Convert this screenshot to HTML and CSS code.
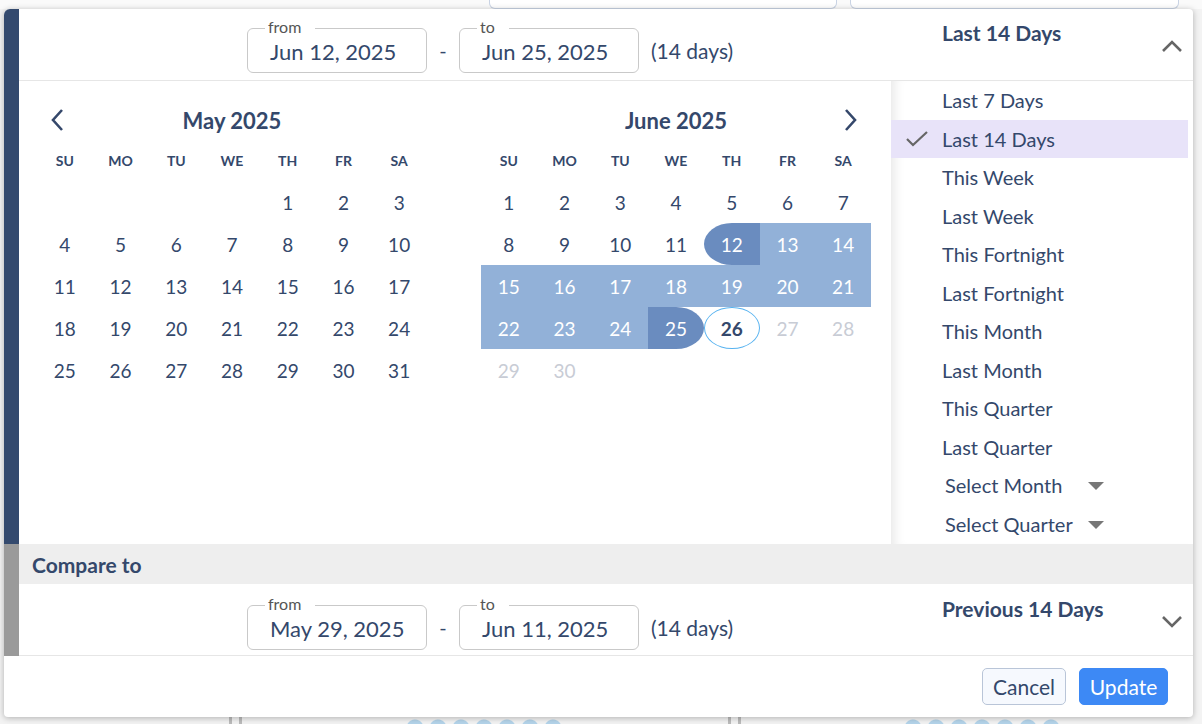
FILE: index.html
```html
<!DOCTYPE html>
<html lang="en">
<head>
    <meta charset="UTF-8">
    <meta name="viewport" content="width=device-width, initial-scale=1.0">
    <title>Date Range Picker</title>
    <link rel="stylesheet" href="styles.css">
</head>
<body>
    <div class="backdrop">
        <div class="toolbar">
            <div class="tool-btn first"></div>
            <div class="tool-btn second"></div>
        </div>
        <div class="chart-strip">
            <span class="axis a1"></span>
            <span class="dots d1"></span>
            <span class="axis a2"></span>
            <span class="dots d2"></span>
        </div>
    </div>

    <div class="picker">
        <section class="range primary">
            <div class="range-head">
                <div class="dates">
                    <div class="field">
                        <span class="field-label">from</span>
                        <span class="field-value">Jun 12, 2025</span>
                    </div>
                    <span class="dash">-</span>
                    <div class="field">
                        <span class="field-label">to</span>
                        <span class="field-value">Jun 25, 2025</span>
                    </div>
                    <span class="count">(14 days)</span>
                </div>
                <div class="preset-toggle">
                    <span class="preset-name">Last 14 Days</span>
                    <svg class="chevron" width="22" height="14" viewBox="0 0 22 14"><path d="M2 12 L11 3 L20 12" fill="none" stroke="#666" stroke-width="2.6"/></svg>
                </div>
            </div>

            <div class="range-body">
                <div class="calendars">
                    <div class="month">
                        <div class="month-head">
                            <span class="nav"><svg width="14" height="24" viewBox="0 0 14 24"><path d="M12 2 L3 12 L12 22" fill="none" stroke="#35486b" stroke-width="2.6"/></svg></span>
                            <span class="month-title">May 2025</span>
                            <span class="nav"></span>
                        </div>
                        <div class="weekdays">
                            <span>SU</span><span>MO</span><span>TU</span><span>WE</span><span>TH</span><span>FR</span><span>SA</span>
                        </div>
                        <div class="days">
                            <span></span><span></span><span></span><span></span>
                            <span>1</span><span>2</span><span>3</span>
                            <span>4</span><span>5</span><span>6</span><span>7</span><span>8</span><span>9</span><span>10</span>
                            <span>11</span><span>12</span><span>13</span><span>14</span><span>15</span><span>16</span><span>17</span>
                            <span>18</span><span>19</span><span>20</span><span>21</span><span>22</span><span>23</span><span>24</span>
                            <span>25</span><span>26</span><span>27</span><span>28</span><span>29</span><span>30</span><span>31</span>
                        </div>
                    </div>

                    <div class="month">
                        <div class="month-head">
                            <span class="nav"></span>
                            <span class="month-title">June 2025</span>
                            <span class="nav"><svg width="14" height="24" viewBox="0 0 14 24"><path d="M2 2 L11 12 L2 22" fill="none" stroke="#35486b" stroke-width="2.6"/></svg></span>
                        </div>
                        <div class="weekdays">
                            <span>SU</span><span>MO</span><span>TU</span><span>WE</span><span>TH</span><span>FR</span><span>SA</span>
                        </div>
                        <div class="days">
                            <span>1</span><span>2</span><span>3</span><span>4</span><span>5</span><span>6</span><span>7</span>
                            <span>8</span><span>9</span><span>10</span><span>11</span><span class="in-range start">12</span><span class="in-range">13</span><span class="in-range">14</span>
                            <span class="in-range">15</span><span class="in-range">16</span><span class="in-range">17</span><span class="in-range">18</span><span class="in-range">19</span><span class="in-range">20</span><span class="in-range">21</span>
                            <span class="in-range">22</span><span class="in-range">23</span><span class="in-range">24</span><span class="in-range end">25</span><span class="today">26</span><span class="disabled">27</span><span class="disabled">28</span>
                            <span class="disabled">29</span><span class="disabled">30</span>
                        </div>
                    </div>
                </div>

                <ul class="presets">
                    <li><span class="mark"></span>Last 7 Days</li>
                    <li class="active"><span class="mark"><svg width="24" height="16" viewBox="0 0 24 16"><path d="M2 8 L8 14 L22 1" fill="none" stroke="#666" stroke-width="2.2"/></svg></span>Last 14 Days</li>
                    <li><span class="mark"></span>This Week</li>
                    <li><span class="mark"></span>Last Week</li>
                    <li><span class="mark"></span>This Fortnight</li>
                    <li><span class="mark"></span>Last Fortnight</li>
                    <li><span class="mark"></span>This Month</li>
                    <li><span class="mark"></span>Last Month</li>
                    <li><span class="mark"></span>This Quarter</li>
                    <li><span class="mark"></span>Last Quarter</li>
                    <li class="select"><span class="mark"></span><span class="select-label">Select Month</span><span class="caret"></span></li>
                    <li class="select"><span class="mark"></span><span class="select-label">Select Quarter</span><span class="caret"></span></li>
                </ul>
            </div>
        </section>

        <div class="compare-label">Compare to</div>

        <section class="range compare">
            <div class="range-head">
                <div class="dates">
                    <div class="field">
                        <span class="field-label">from</span>
                        <span class="field-value">May 29, 2025</span>
                    </div>
                    <span class="dash">-</span>
                    <div class="field">
                        <span class="field-label">to</span>
                        <span class="field-value">Jun 11, 2025</span>
                    </div>
                    <span class="count">(14 days)</span>
                </div>
                <div class="preset-toggle">
                    <span class="preset-name">Previous 14 Days</span>
                    <svg class="chevron" width="22" height="14" viewBox="0 0 22 14"><path d="M2 2 L11 11 L20 2" fill="none" stroke="#666" stroke-width="2.6"/></svg>
                </div>
            </div>
        </section>

        <div class="actions">
            <button class="btn cancel">Cancel</button>
            <button class="btn update">Update</button>
        </div>
    </div>
</body>
</html>
```

FILE: styles.css
```css
body {
    margin: 0;
    font-family: Lato, "Open Sans", sans-serif;
    color: #34486b;
    background-color: #f3f3f3;
    width: 1202px;
    height: 724px;
    overflow: hidden;
    position: relative;
}
.backdrop {
    height: 724px;
    display: flex;
    flex-direction: column;
    justify-content: space-between;
}
.toolbar {
    height: 9px;
    background-color: #fafafa;
    display: flex;
    padding-left: 489px;
    gap: 13px;
}
.tool-btn {
    height: 8px;
    background-color: #fff;
    border: 1px solid #c9d3e4;
    border-top: none;
    border-radius: 0 0 6px 6px;
}
.tool-btn.first {
    width: 346px;
}
.tool-btn.second {
    width: 327px;
}
.chart-strip {
    height: 7px;
    display: flex;
    align-items: flex-end;
}
.axis {
    display: block;
    height: 7px;
    width: 13px;
    border-left: 3px solid #bbb;
    border-right: 3px solid #bbb;
    box-sizing: border-box;
}
.axis.a1 {
    margin-left: 229px;
}
.dots {
    display: block;
    height: 7px;
    background-image: radial-gradient(circle at 11px 11px, #b4d4ea 8px, transparent 9px);
    background-size: 23px 7px;
}
.dots.d1 {
    width: 161px;
    margin-left: 162px;
}
.axis.a2 {
    margin-left: 163px;
}
.dots.d2 {
    width: 161px;
    margin-left: 161px;
}

/* picker panel floats over the page */
.picker {
    position: absolute;
    left: 4px;
    top: 9px;
    width: 1189px;
    height: 708px;
    background-color: #fff;
    border-radius: 6px 4px 4px 4px;
    box-shadow: 0 1px 6px rgba(0, 0, 0, 0.28);
    display: flex;
    flex-direction: column;
    overflow: hidden;
}
.range.primary {
    border-left: 15px solid #344a6e;
}
.range.compare,
.compare-label {
    border-left: 15px solid #9a9a9a;
}
.range-head {
    height: 71px;
    display: flex;
    border-bottom: 1px solid #e6e6e6;
}
.dates {
    display: flex;
    align-items: flex-start;
    padding-top: 19px;
    padding-left: 228px;
}
.compare .dates {
    padding-top: 21px;
}
.field {
    position: relative;
    width: 180px;
    height: 45px;
    box-sizing: border-box;
    border: 1px solid #c9c9c9;
    border-radius: 6px;
    display: flex;
    align-items: center;
    padding-left: 22px;
}
.field-label {
    position: absolute;
    top: -11px;
    left: 17px;
    padding: 0 14px 0 3px;
    background-color: #fff;
    font-size: 16px;
    line-height: 18px;
    color: #555;
}
.field-value {
    font-size: 22px;
    padding-top: 2px;
}
.dash {
    width: 32px;
    text-align: center;
    font-size: 20px;
    line-height: 45px;
}
.count {
    margin-left: 12px;
    font-size: 21px;
    line-height: 45px;
}
.preset-toggle {
    margin-left: auto;
    width: 302px;
    box-sizing: border-box;
    display: flex;
    justify-content: space-between;
    align-items: flex-start;
    padding: 10px 10px 0 51px;
}
.compare .preset-toggle {
    padding-top: 11px;
}
.preset-name {
    font-size: 21px;
    font-weight: bold;
    line-height: 28px;
}
.chevron {
    margin-top: 20px;
}

/* calendars */
.range-body {
    display: flex;
    height: 463px;
}
.calendars {
    width: 872px;
    box-sizing: border-box;
    padding: 20px 19px 0 18px;
    display: flex;
    gap: 54px;
}
.month {
    width: 390px;
}
.month-head {
    height: 38px;
    display: grid;
    grid-template-columns: 40px 1fr 40px;
    align-items: center;
}
.nav {
    display: flex;
    justify-content: center;
    align-items: center;
}
.month-title {
    text-align: center;
    font-size: 22px;
    font-weight: bold;
}
.weekdays {
    height: 42px;
    display: grid;
    grid-template-columns: repeat(7, 1fr);
    align-items: center;
    text-align: center;
    font-size: 14px;
    font-weight: bold;
}
.days {
    display: grid;
    grid-template-columns: repeat(7, 1fr);
    grid-auto-rows: 42px;
}
.days span {
    display: flex;
    justify-content: center;
    align-items: center;
    font-size: 19px;
    box-sizing: border-box;
}
.days .in-range {
    background-color: #92b1d8;
    color: #fff;
}
.days .start,
.days .end {
    background-color: #6a8cbf;
}
.days .start {
    border-radius: 50% 0 0 50%;
}
.days .end {
    border-radius: 0 50% 50% 0;
}
.days .today {
    border: 1px solid #58b3f0;
    border-radius: 50%;
    font-weight: bold;
}
.days .disabled {
    color: #c8ccd5;
}

/* presets */
.presets {
    list-style: none;
    margin: 0 5px 0 0;
    padding: 0;
    flex: 1;
    box-shadow: inset 12px 0 12px -9px rgba(0, 0, 0, 0.1);
}
.presets li {
    height: 38.5px;
    display: flex;
    align-items: center;
    font-size: 20px;
}
.presets li.active {
    background-color: #e8e3f9;
}
.mark {
    width: 51px;
    flex-shrink: 0;
    display: flex;
    justify-content: center;
}
.select-label {
    width: 143px;
    padding-left: 3px;
}
.caret {
    width: 0;
    height: 0;
    border-left: 8px solid transparent;
    border-right: 8px solid transparent;
    border-top: 8px solid #777;
    margin-top: 2px;
}

/* compare */
.compare-label {
    height: 40px;
    background-color: #eeeeee;
    display: flex;
    align-items: center;
    padding-left: 13px;
    font-size: 21px;
    font-weight: bold;
}
.actions {
    flex: 1;
    display: flex;
    justify-content: flex-end;
    align-items: flex-start;
    gap: 13px;
    padding: 12px 25px 0 0;
}
.btn {
    height: 37px;
    font-family: inherit;
    font-size: 21px;
    border-radius: 5px;
    padding: 0 9px;
    cursor: pointer;
}
.btn.cancel {
    width: 84px;
    background-color: #f6f9fe;
    border: 1px solid #b9c5d8;
    color: #34486b;
}
.btn.update {
    width: 89px;
    background-color: #3d89f5;
    border: 1px solid #3d89f5;
    color: #fff;
}
```
